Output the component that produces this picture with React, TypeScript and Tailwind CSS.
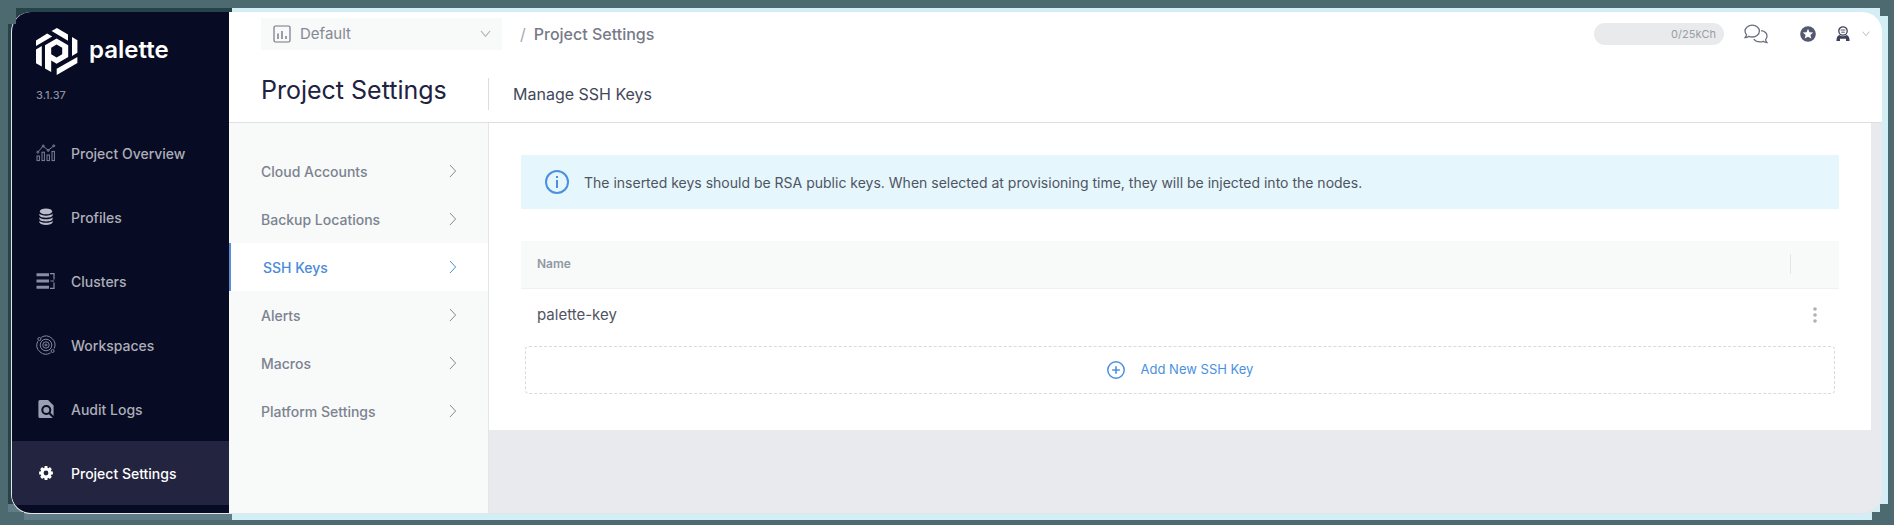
import type { ReactNode } from "react";

type IconProps = { className?: string };

function PaletteMark({ className }: IconProps) {
  return (
    <svg viewBox="0 0 42 47" className={className} fill="currentColor" aria-hidden="true">
      <path d="M0 12.6 L11.2 5.6 L16.2 8.6 L0 18Z" />
      <path d="M15.6 3 L20.9 0 L32 6.6 V12.8Z" />
      <path d="M36 9 L41.4 12.2 V24.8 L36 28Z" />
      <path d="M41.4 29 V35 L20.7 47 V40.8Z" />
      <path d="M0 21.4 L5.8 18 V38.6 L0 35.2Z" />
      <path
        fillRule="evenodd"
        d="M9 17.2 L20.6 10.4 L32.2 17.2 V29 L20.6 35.7 L15.2 32.6 V44 L9 40.4Z M15.2 19.8 V26.2 L20.6 29.4 L26.2 26.2 V19.8 L20.6 16.6Z"
      />
    </svg>
  );
}

function OverviewIcon({ className }: IconProps) {
  return (
    <svg viewBox="0 0 20 18" className={className} fill="none" stroke="currentColor" aria-hidden="true">
      <rect x="1" y="12" width="2.4" height="4.6" />
      <rect x="6" y="8.2" width="2.4" height="8.4" />
      <rect x="11" y="11" width="2.4" height="5.6" />
      <rect x="16" y="7.4" width="2.4" height="9.2" />
      <path d="M1.8 8.2 L7.2 2 L12.2 6.4 L17.8 1.8" />
      <circle cx="1.8" cy="8.2" r="1" />
      <circle cx="7.2" cy="2" r="1" />
      <circle cx="12.2" cy="6.4" r="1" />
      <circle cx="17.8" cy="1.8" r="1" />
    </svg>
  );
}

function ProfilesIcon({ className }: IconProps) {
  return (
    <svg viewBox="0 0 20 18" className={className} fill="currentColor" aria-hidden="true">
      <ellipse cx="10" cy="3.4" rx="6.2" ry="2.9" />
      <path d="M3.4 5.6 C5 8.3 15 8.3 16.6 5.6 V7.6 C15.6 10.6 4.4 10.6 3.4 7.6Z" />
      <path d="M3.4 9.2 C5 11.9 15 11.9 16.6 9.2 V11.2 C15.6 14.2 4.4 14.2 3.4 11.2Z" />
      <path d="M3.4 12.8 C5 15.5 15 15.5 16.6 12.8 V14.6 C15.6 17.9 4.4 17.9 3.4 14.6Z" />
    </svg>
  );
}

function ClustersIcon({ className }: IconProps) {
  return (
    <svg viewBox="0 0 20 18" className={className} fill="none" stroke="currentColor" aria-hidden="true">
      <path strokeWidth="3" d="M.5 2.8 H13 M.5 9 H13 M.5 15.2 H13" />
      <path strokeWidth="1.2" d="M14 1.6 H18 V7.5 M14.5 9 H18 M18 10.5 V16.4 H14" />
    </svg>
  );
}

function WorkspacesIcon({ className }: IconProps) {
  return (
    <svg viewBox="0 0 20 20" className={className} fill="none" stroke="currentColor" aria-hidden="true">
      <path d="M5.2 2.4 A9 9 0 0 1 18.2 13.6 M14.6 17.8 A9 9 0 0 1 1.8 6.2" />
      <circle cx="10" cy="10" r="5.8" />
      <circle cx="10" cy="10" r="3.2" />
      <circle cx="10" cy="10" r="1" />
      <circle cx="3.4" cy="4" r="1.5" />
      <circle cx="16.6" cy="16" r="1.5" />
    </svg>
  );
}

function AuditIcon({ className }: IconProps) {
  return (
    <svg viewBox="0 0 20 20" className={className} aria-hidden="true">
      <path
        fill="currentColor"
        d="M4 1 H12 L17.6 6.6 V17.4 A1.6 1.6 0 0 1 16 19 H4 A1.6 1.6 0 0 1 2.4 17.4 V2.6 A1.6 1.6 0 0 1 4 1Z"
      />
      <g fill="none" stroke="#070b24" strokeWidth="2">
        <circle cx="10.3" cy="11" r="4" />
        <path d="M13.2 14 L18 18.8" />
      </g>
    </svg>
  );
}

function GearIcon({ className }: IconProps) {
  return (
    <svg viewBox="0 0 20 20" className={className} fill="none" stroke="currentColor" aria-hidden="true">
      <circle cx="10" cy="10" r="5" strokeWidth="4" />
      <path
        strokeWidth="3.6"
        d="M10 1.4 V4.5 M10 15.5 V18.6 M1.4 10 H4.5 M15.5 10 H18.600 M3.900 3.900 L6 6 M14 14 L16.100 16.100 M16.100 3.900 L14 6 M6 14 L3.900 16.100"
      />
    </svg>
  );
}

function ChevronRight({ className }: IconProps) {
  return (
    <svg viewBox="0 0 8 14" className={className} fill="none" stroke="currentColor" aria-hidden="true">
      <path d="M1 1 L6.6 7 L1 13" />
    </svg>
  );
}

function ChevronDown({ className }: IconProps) {
  return (
    <svg viewBox="0 0 12 8" className={className} fill="none" stroke="currentColor" strokeWidth="1.2" aria-hidden="true">
      <path d="M1 1 L6 7 L11 1" />
    </svg>
  );
}

function ProjectIcon({ className }: IconProps) {
  return (
    <svg viewBox="0 0 18 18" className={className} fill="none" stroke="currentColor" aria-hidden="true">
      <rect x="1" y="1" width="16" height="16" rx="1.5" strokeWidth="1.2" />
      <path strokeWidth="1.4" d="M5 8.5 V14 M9 6 V14 M13 11 V14" />
    </svg>
  );
}

function ChatIcon({ className }: IconProps) {
  return (
    <svg
      viewBox="0 0 24 20"
      className={className}
      fill="none"
      stroke="currentColor"
      strokeWidth="1.3"
      aria-hidden="true"
    >
      <path d="M8.2 1.2 C12.3 1.2 15.4 3.8 15.4 7.1 C15.4 10.4 12.3 13 8.2 13 C7 13 5.9 12.8 4.9 12.3 C3.8 13.2 2.4 13.7 1 13.7 C1.8 12.9 2.4 11.8 2.5 10.7 C1.5 9.7 1 8.4 1 7.1 C1 3.8 4.2 1.2 8.2 1.2Z" />
      <path d="M17 6.7 C20.5 7.2 23 9.5 23 12.3 C23 13.5 22.5 14.7 21.6 15.6 C21.7 16.8 22.2 17.8 23 18.6 C21.6 18.6 20.3 18.1 19.2 17.3 C18.2 17.7 17.2 17.9 16 17.9 C13.3 17.9 11 16.8 9.8 15" />
    </svg>
  );
}

function StarBadgeIcon({ className }: IconProps) {
  return (
    <svg viewBox="0 0 16 16" className={className} aria-hidden="true">
      <circle cx="8" cy="8" r="7.8" fill="currentColor" />
      <path
        fill="#fff"
        d="M8 2.8 L9.5 6.2 L13.2 6.500 L10.400 9 L11.300 12.600 L8 10.700 L4.700 12.600 L5.600 9 L2.800 6.500 L6.500 6.200Z"
      />
    </svg>
  );
}

function UserIcon({ className }: IconProps) {
  return (
    <svg viewBox="0 0 14 16" className={className} aria-hidden="true">
      <circle cx="7" cy="5" r="4.2" fill="none" stroke="currentColor" strokeWidth="1.3" />
      <path d="M4.600 4 H9.400 M5.200 6.200 H8.800" stroke="currentColor" strokeWidth=".9" />
      <path
        fill="currentColor"
        d="M3.400 9 C5.500 10.600 8.500 10.600 10.600 9 C12.600 9.800 13.600 11.500 13.600 15 H10 V12.800 H4 V15 H.4 C.4 11.500 1.400 9.800 3.400 9Z"
      />
    </svg>
  );
}

function InfoIcon({ className }: IconProps) {
  return (
    <svg viewBox="0 0 24 24" className={className} fill="none" stroke="currentColor" aria-hidden="true">
      <circle cx="12" cy="12" r="11" strokeWidth="2" />
      <path strokeWidth="2" d="M12 10 V18 M12 6 V8" />
    </svg>
  );
}

function PlusCircleIcon({ className }: IconProps) {
  return (
    <svg viewBox="0 0 18 18" className={className} fill="none" stroke="currentColor" aria-hidden="true">
      <circle cx="9" cy="9" r="8.2" strokeWidth="1.5" />
      <path strokeWidth="1.6" d="M9 5.2 V12.8 M5.2 9 H12.8" />
    </svg>
  );
}

function DotsIcon({ className }: IconProps) {
  return (
    <svg viewBox="0 0 4 16" className={className} fill="currentColor" aria-hidden="true">
      <circle cx="2" cy="2" r="1.8" />
      <circle cx="2" cy="8" r="1.8" />
      <circle cx="2" cy="14" r="1.8" />
    </svg>
  );
}

const mainNav: { label: string; icon: ReactNode; active?: boolean }[] = [
  { label: "Project Overview", icon: <OverviewIcon className="w-5 text-[#7d8097]" /> },
  { label: "Profiles", icon: <ProfilesIcon className="w-5 text-[#b9bbcb]" /> },
  { label: "Clusters", icon: <ClustersIcon className="w-5 text-[#8b8ea3]" /> },
  { label: "Workspaces", icon: <WorkspacesIcon className="w-5 text-[#85889d]" /> },
  { label: "Audit Logs", icon: <AuditIcon className="w-5 text-[#9c9fb2]" /> },
  { label: "Project Settings", icon: <GearIcon className="w-4 text-white" />, active: true },
];

const settingsNav = ["Cloud Accounts", "Backup Locations", "SSH Keys", "Alerts", "Macros", "Platform Settings"];

function Sidebar() {
  return (
    <aside className="flex w-[217px] shrink-0 flex-col bg-[#070b24]">
      <div className="flex h-[109px] flex-col pt-4 pl-6">
        <div className="flex items-center gap-[11px] text-white">
          <PaletteMark className="h-[47px] w-[42px]" />
          <span className="pb-1 text-[24px] leading-8 font-semibold">palette</span>
        </div>
        <span className="mt-3 text-[11px] leading-4 font-medium text-[#8c8fa3]">3.1.37</span>
      </div>
      <nav>
        {mainNav.map((item) => (
          <a
            key={item.label}
            href="#"
            className={`flex h-16 items-center gap-[15px] pl-6 text-[14px] font-medium ${
              item.active ? "bg-[#23243f] text-white" : "text-[#adaeb8]"
            }`}
          >
            <span className="flex w-5 justify-center">{item.icon}</span>
            {item.label}
          </a>
        ))}
      </nav>
    </aside>
  );
}

function TopBar() {
  return (
    <div className="flex items-center justify-between pt-1.5 pr-3 pl-8">
      <div className="flex items-center">
        <div className="relative w-[241px]">
          <select
            aria-label="Project"
            className="h-8 w-full appearance-none bg-[#f8f9f9] pl-[39px] text-[15px] text-[#858993]"
          >
            <option>Default</option>
          </select>
          <ProjectIcon className="pointer-events-none absolute top-[7px] left-3 w-[18px] text-[#737784]" />
          <ChevronDown className="pointer-events-none absolute top-3 right-[11px] w-[11px] text-[#b4b6bd]" />
        </div>
        <span className="ml-[18px] text-[16px] text-[#a5a8b0]">/</span>
        <span className="ml-2 text-[16px] font-medium text-[#767a88]">Project Settings</span>
      </div>
      <div className="flex items-center">
        <div className="h-[22px] w-[130px] rounded-full bg-[#e9eaec] pr-2 text-right text-[11px] leading-[22px] text-[#9a9da3]">
          0/25kCh
        </div>
        <button type="button" aria-label="Chat" className="ml-5 text-[#6c7080]">
          <ChatIcon className="w-6" />
        </button>
        <button type="button" aria-label="Favorites" className="ml-8 text-[#555870]">
          <StarBadgeIcon className="w-4" />
        </button>
        <button type="button" aria-label="Account" className="ml-5 flex items-center gap-3 text-[#3d4059]">
          <UserIcon className="w-[14px]" />
          <ChevronDown className="w-2 text-[#a9acb4]" />
        </button>
      </div>
    </div>
  );
}

function SettingsNav() {
  return (
    <nav className="w-[260px] shrink-0 border-r border-[#e4e5e6] bg-[#f8f9f9] pt-6">
      {settingsNav.map((label) => {
        const active = label === "SSH Keys";
        return (
          <a
            key={label}
            href="#"
            className={`flex h-12 items-center justify-between pr-[31px] pl-8 text-[14px] font-medium ${
              active ? "border-l-2 border-[#5a8fd6] bg-white text-[#4a8bd8]" : "text-[#7b8390]"
            }`}
          >
            {label}
            <ChevronRight className={`w-2 ${active ? "text-[#4a8bd8]" : "text-[#858a93]"}`} />
          </a>
        );
      })}
    </nav>
  );
}

function KeysPanel() {
  return (
    <section className="mr-[11px] bg-white px-8 pt-8 pb-9">
      <div className="flex h-[54px] items-center gap-[15px] bg-[#e5f6fd] pl-6 text-[14px] text-[#4f5461]">
        <InfoIcon className="w-6 shrink-0 text-[#4a90e2]" />
        <p>
          The inserted keys should be RSA public keys. When selected at provisioning time, they will be injected into
          the nodes.
        </p>
      </div>
      <table className="mt-8 w-full text-left">
        <thead className="border-b border-[#eff0f1] bg-[#f8f9f9]">
          <tr className="h-[47px]">
            <th className="px-4 text-[12px] font-semibold text-[#8f98a3]">Name</th>
            <th className="w-[49px]" aria-label="Actions">
              <div className="h-5 border-l border-[#e4e5e7]" />
            </th>
          </tr>
        </thead>
        <tbody>
          <tr className="h-[54px]">
            <td className="px-4 text-[15px] text-[#4f5461]">palette-key</td>
            <td>
              <button type="button" aria-label="Key actions" className="flex w-full justify-center text-[#adb0b5]">
                <DotsIcon className="w-1" />
              </button>
            </td>
          </tr>
        </tbody>
      </table>
      <div className="mt-1 px-1">
        <button
          type="button"
          className="flex h-12 w-full items-center justify-center gap-4 rounded border border-dashed border-[#d9dadc] text-[13px] text-[#4a90e2]"
        >
          <PlusCircleIcon className="w-[18px]" />
          Add New SSH Key
        </button>
      </div>
    </section>
  );
}

export default function App() {
  return (
    <div className="flex min-h-screen bg-[#4d6a71] pt-2 pr-1.5 pb-[5px] pl-2 font-[Inter,'Liberation_Sans',sans-serif]">
      <div className="flex flex-1 bg-[linear-gradient(to_right,#617c84_224px,#d3eef5_224px),linear-gradient(to_right,#27434a_224px,#d3eef5_224px)] bg-[length:100%_16px,100%_100%] bg-[position:bottom,top] bg-no-repeat pt-1 pr-1.5 pb-1.5 pl-[3px] [clip-path:polygon(0_16px,8px_16px,8px_0,calc(100%-8px)_0,calc(100%-8px)_8px,100%_8px,100%_calc(100%-16px),calc(100%-8px)_calc(100%-16px),calc(100%-8px)_calc(100%-8px),calc(100%-16px)_calc(100%-8px),calc(100%-16px)_100%,16px_100%,16px_calc(100%-8px),0_calc(100%-8px))]">
        <div className="flex flex-1 overflow-hidden rounded-[20px] border-b border-l border-[#dfe7e8] bg-[#e8eaed]">
          <Sidebar />
          <main className="flex min-w-0 flex-1 flex-col">
            <header className="h-[111px] border-b border-[#dedfe1] bg-white">
              <TopBar />
              <div className="mt-5 flex items-center pl-8">
                <h1 className="w-[227px] text-[25px] leading-8 text-[#20223f]">Project Settings</h1>
                <h2 className="mt-2 border-l border-[#dcdde1] pl-6 text-[16px] leading-8 text-[#43475a]">
                  Manage SSH Keys
                </h2>
              </div>
            </header>
            <div className="flex flex-1">
              <SettingsNav />
              <div className="min-w-0 flex-1">
                <KeysPanel />
              </div>
            </div>
          </main>
        </div>
      </div>
    </div>
  );
}
